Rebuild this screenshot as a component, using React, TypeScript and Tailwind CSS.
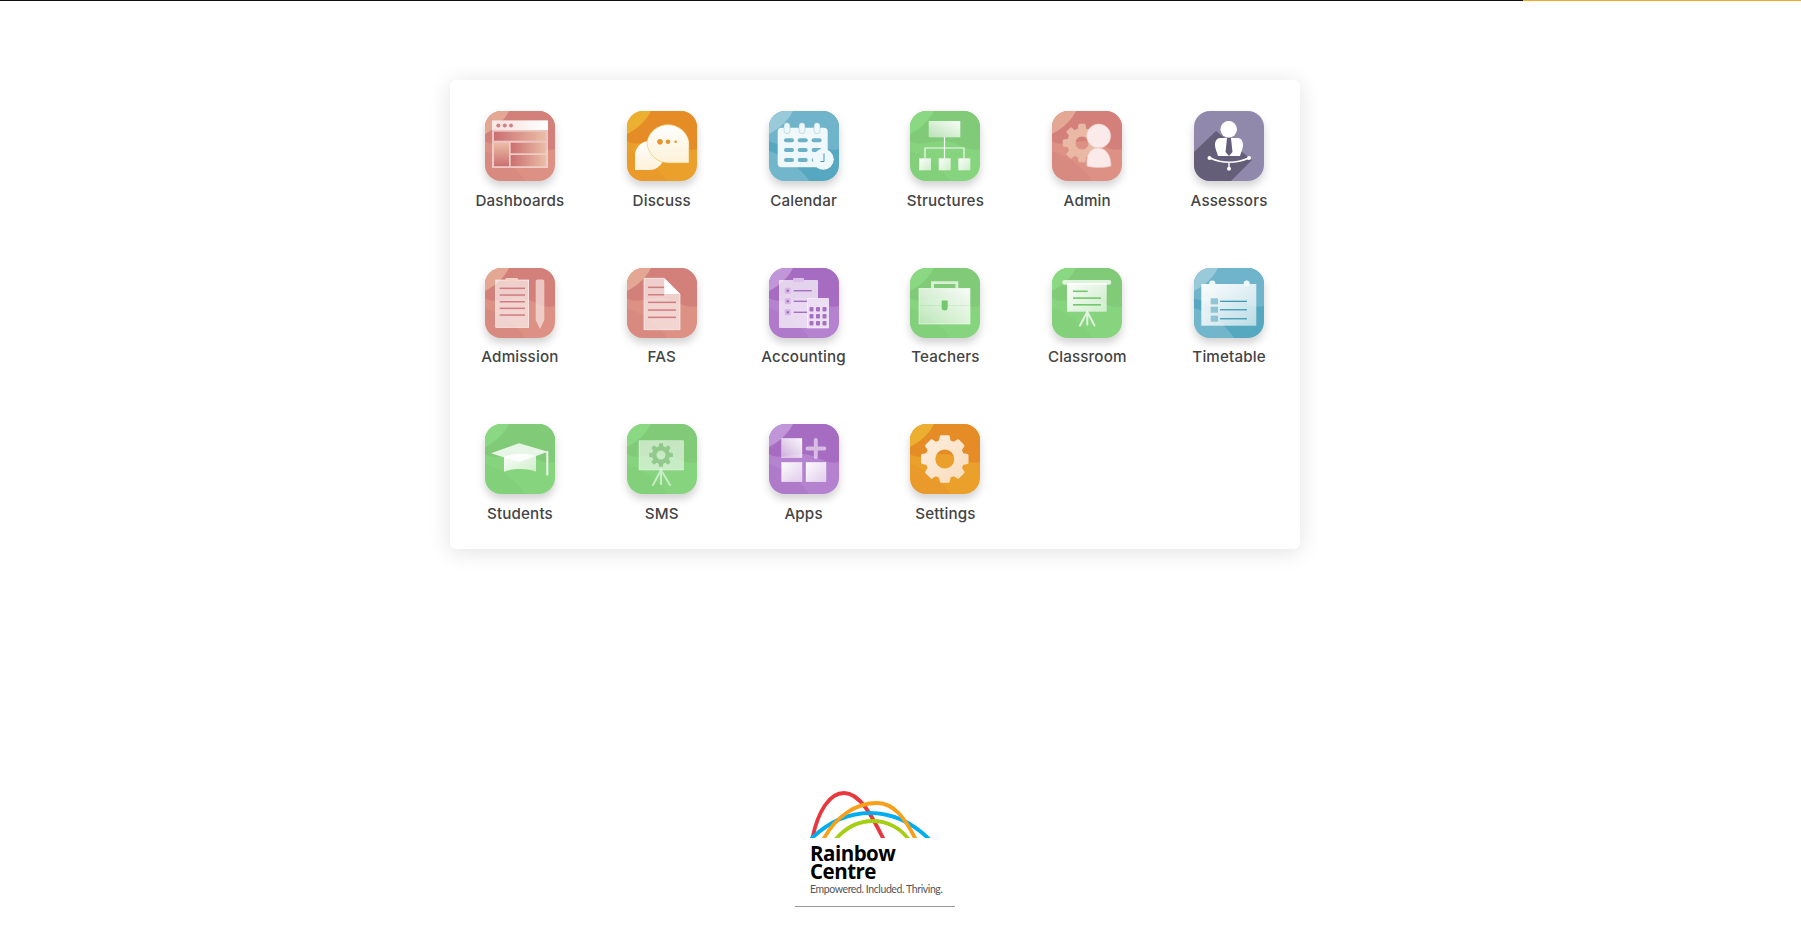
import type { ReactNode } from 'react';

type Palette = { base: string; top: string; light: string; band: string; ink: string };

const salmon: Palette = { base: '#dc9184', top: '#d4807a', light: '#e3a794', band: '#d6857d', ink: '#c9666b' };
const orange: Palette = { base: '#eba02b', top: '#e68c26', light: '#ecb030', band: '#e8962a', ink: '#e8952a' };
const teal: Palette = { base: '#55a8c0', top: '#6fb4ca', light: '#98cada', band: '#83bfd2', ink: '#3f9ab6' };
const green: Palette = { base: '#86d47e', top: '#80ca78', light: '#8bd883', band: '#82cd7a', ink: '#72c86c' };
const purple: Palette = { base: '#b582cf', top: '#a66cc1', light: '#c096d8', band: '#ac74c7', ink: '#9a5cb8' };

// simple toothed wheel, used by Admin, SMS and Settings
function gearPath(cx: number, cy: number, ro: number, ri: number, teeth: number, hole: number) {
  const step = (Math.PI * 2) / teeth;
  let d = '';
  for (let i = 0; i < teeth; i++) {
    const a = i * step - Math.PI / 2;
    const pts: [number, number][] = [
      [ri, a - step * 0.32],
      [ro, a - step * 0.2],
      [ro, a + step * 0.2],
      [ri, a + step * 0.32],
    ];
    for (const [r, t] of pts) {
      d += `${d ? 'L' : 'M'}${(cx + r * Math.cos(t)).toFixed(2)} ${(cy + r * Math.sin(t)).toFixed(2)}`;
    }
  }
  d += `Z M${cx - hole} ${cy}a${hole} ${hole} 0 1 0 ${hole * 2} 0a${hole} ${hole} 0 1 0 ${-hole * 2} 0Z`;
  return d;
}

function Defs() {
  return (
    <svg className="block h-0 w-0" aria-hidden="true">
      <defs>
        <linearGradient id="fade" x1="0" y1="0" x2="1" y2="1">
          <stop offset="0" stopColor="#fff" stopOpacity="0.97" />
          <stop offset="1" stopColor="#fff" stopOpacity="0.6" />
        </linearGradient>
        <linearGradient id="fadeBack" x1="1" y1="0" x2="0" y2="1">
          <stop offset="0" stopColor="#fff" stopOpacity="0.95" />
          <stop offset="1" stopColor="#fff" stopOpacity="0.45" />
        </linearGradient>
        <linearGradient id="barFade" x1="0" y1="0" x2="1" y2="0">
          <stop offset="0" stopColor="#fff" stopOpacity="0.45" />
          <stop offset="1" stopColor="#fff" stopOpacity="1" />
        </linearGradient>
        <linearGradient id="panel" x1="0" y1="0" x2="1" y2="0">
          <stop offset="0" stopColor="#cb6f72" />
          <stop offset="1" stopColor="#ebbea6" />
        </linearGradient>
        <linearGradient id="panelDown" x1="0" y1="0" x2="0" y2="1">
          <stop offset="0" stopColor="#ebbea6" />
          <stop offset="1" stopColor="#cb6f72" />
        </linearGradient>
        <linearGradient id="cream" x1="0" y1="0" x2="0" y2="1">
          <stop offset="0" stopColor="#fff" />
          <stop offset="1" stopColor="#fdf1d8" />
        </linearGradient>
        <linearGradient id="gearCream" x1="0" y1="0" x2="1" y2="1">
          <stop offset="0" stopColor="#fdeede" />
          <stop offset="1" stopColor="#f9dcbc" />
        </linearGradient>
      </defs>
    </svg>
  );
}

function Tile({ p, children, plain }: { p: Palette; children: ReactNode; plain?: boolean }) {
  return (
    <div className="h-[70px] w-[70px] shrink-0 overflow-hidden rounded-2xl shadow-[0_5px_9px_rgba(0,0,0,0.18)]">
      <svg viewBox="0 0 70 70" className="block h-full w-full">
        <rect width="70" height="70" fill={plain ? '#9189ac' : p.base} />
        {!plain && (
          <>
            <path d="M14 0H70V38C58 42 48 30 34 30C20 30 8 36 0 30V12C8 10 14 6 14 0Z" fill={p.top} />
            <path d="M0 0H24C20 8 12 17 0 23Z" fill={p.light} />
            <path d="M0 40C12 44 22 50 30 58C34 62 38 66 40 70H0Z" fill={p.band} opacity="0.6" />
          </>
        )}
        {children}
      </svg>
    </div>
  );
}

const Dashboards = () => (
  <Tile p={salmon}>
    <rect x="7" y="9.5" width="56" height="47.5" fill="#fff" fillOpacity="0.55" />
    <rect x="7" y="9.5" width="56" height="9.5" fill="url(#barFade)" />
    <circle cx="13.3" cy="14.5" r="2" fill={salmon.ink} opacity="0.8" />
    <circle cx="19.8" cy="14.5" r="2" fill={salmon.ink} opacity="0.8" />
    <circle cx="26" cy="14.5" r="2" fill={salmon.ink} opacity="0.8" />
    <rect x="9" y="20.7" width="52" height="9" fill="url(#panel)" />
    <rect x="9" y="31.7" width="15" height="23.5" fill="url(#panelDown)" />
    <rect x="25.7" y="31.7" width="35.3" height="10.6" fill="url(#panel)" />
    <rect x="25.7" y="44" width="35.3" height="11.2" fill="url(#panel)" />
  </Tile>
);

const Discuss = () => (
  <Tile p={orange}>
    <path d="M8 59V44.5A14.5 14.5 0 1 1 22.5 59Z" fill="url(#cream)" />
    <path d="M20 30.5A21.5 21.5 0 0 1 62 30.5V52H41.5A21.5 21.5 0 0 1 20 30.5Z" fill="url(#cream)" stroke={orange.light} strokeWidth="0.5" />
    <circle cx="33" cy="30.7" r="2.8" fill={orange.ink} />
    <circle cx="41" cy="30.7" r="2.3" fill={orange.ink} />
    <circle cx="48.7" cy="30.7" r="1.3" fill={orange.ink} />
  </Tile>
);

const Calendar = () => (
  <Tile p={teal}>
    <rect x="8.7" y="16.7" width="50" height="39.6" rx="4" fill="#fff" opacity="0.9" />
    {[18, 33, 48].map((x) => (
      <rect key={x} x={x - 3} y="11.7" width="6" height="11" rx="3" fill="#eef7fa" stroke="#8cc4d5" strokeWidth="0.5" />
    ))}
    {[29.3, 39, 49].map((y) =>
      [20, 33.7, 47.6].map((x) => <rect key={`${x}-${y}`} x={x - 5} y={y - 2} width="10" height="4" rx="2" fill={teal.ink} opacity="0.75" />),
    )}
    <circle cx="54.3" cy="48.3" r="10.5" fill="#eef7fa" />
    <path d="M55 42.5V50.5H51.5" fill="none" stroke={teal.ink} strokeWidth="1" />
  </Tile>
);

const Structures = () => (
  <Tile p={green}>
    <rect x="18.7" y="10" width="31.6" height="16.3" fill="url(#fadeBack)" />
    <path d="M34.5 26V37M15 47.3V37H54V47.3M34.5 37V47.3" fill="none" stroke="#fff" strokeOpacity="0.9" strokeWidth="1.2" />
    {[9, 28.7, 48.3].map((x) => (
      <rect key={x} x={x} y="47.3" width="12" height="12" fill="url(#fade)" />
    ))}
  </Tile>
);

const Admin = () => (
  <Tile p={salmon}>
    <path d={gearPath(30, 32, 19, 14.5, 8, 7)} fill="#eab9a6" fillRule="evenodd" stroke="#eab9a6" strokeWidth="1" strokeLinejoin="round" />
    <circle cx="46.7" cy="25" r="12" fill="#fbeaea" stroke="#f3c9c7" strokeWidth="0.6" />
    <path d="M35 55C34 44 38 37 46 37C54 37 59 44 59 55C52 57 42 57 35 55Z" fill="#fbeaea" stroke="#f3c9c7" strokeWidth="0.6" />
  </Tile>
);

const Assessors = () => (
  <Tile p={salmon} plain>
    <path d="M0 41L22 20L58 49L37 70H0Z" fill="#645e78" />
    <circle cx="34.7" cy="18.3" r="8.3" fill="#fff" />
    <path d="M26 27H44C47 27 49 30 49 34C49 38 47 41 46 45H24C23 41 21 38 21 34C21 30 23 27 26 27Z" fill="#fff" />
    <path d="M33 27H37L37.5 32L38.5 41L35 45L31.5 41L32.5 32Z" fill="#645e78" />
    <path d="M16 47C28 52.5 42 52.5 55 47" fill="none" stroke="#fff" strokeWidth="1.6" />
    <path d="M35 51V57" stroke="#fff" strokeWidth="1.4" />
    <circle cx="15.5" cy="47" r="2" fill="#fff" />
    <circle cx="55" cy="47" r="2" fill="#fff" />
    <circle cx="35" cy="57.7" r="2" fill="#fff" />
  </Tile>
);

const Admission = () => (
  <Tile p={salmon}>
    <rect x="10.7" y="12" width="33" height="47.3" fill="#fff" fillOpacity="0.62" stroke="#fff" strokeWidth="0.6" />
    <rect x="20.5" y="10" width="12.5" height="4" rx="1" fill="#f3d3c8" />
    {[20.3, 27, 33.7, 40.3, 47].map((y) => (
      <rect key={y} x="14.7" y={y - 0.7} width="25.3" height="1.5" fill={salmon.ink} opacity="0.8" />
    ))}
    <path d="M50.7 14A2 2 0 0 1 52.7 11.5H57.3A2 2 0 0 1 59.3 14V52L55 61L50.7 52Z" fill="#fff" fillOpacity="0.55" />
  </Tile>
);

const Fas = () => (
  <Tile p={salmon}>
    <path d="M17 10.3H37.3L53 26V61.7H17Z" fill="#fff" fillOpacity="0.62" stroke="#fff" strokeWidth="0.6" />
    <path d="M37.3 10.3L53 26H37.3Z" fill="#fff" />
    {[19.3, 26.7].map((y) => (
      <rect key={y} x="21" y={y - 0.7} width="16" height="1.5" fill={salmon.ink} opacity="0.8" />
    ))}
    {[34.3, 42, 49.3].map((y) => (
      <rect key={y} x="21" y={y - 0.7} width="28" height="1.5" fill={salmon.ink} opacity="0.8" />
    ))}
  </Tile>
);

const Accounting = () => (
  <Tile p={purple}>
    <rect x="10" y="12" width="39" height="48" fill="#fff" fillOpacity="0.7" rx="1" />
    <rect x="24" y="10" width="11" height="4" rx="1" fill="#dcc0ea" />
    {[22.7, 33.3, 44.3].map((y) => (
      <g key={y}>
        <rect x="15.7" y={y - 3} width="6" height="6" rx="1" fill="#d6b6e6" />
        <rect x="17.7" y={y - 1} width="2" height="2" fill={purple.ink} />
        <rect x="24.7" y={y - 0.7} width="18" height="1.4" fill={purple.ink} opacity="0.85" />
      </g>
    ))}
    <rect x="38.3" y="30.3" width="21.4" height="29.7" fill="#ecdff3" stroke="#fff" strokeWidth="0.5" />
    {[39, 46, 53].map((y) =>
      [42.5, 49, 55.5].map((x) => <rect key={`${x}-${y}`} x={x - 2} y={y} width="4" height="4.5" rx="1" fill={purple.ink} opacity="0.85" />),
    )}
  </Tile>
);

const Teachers = () => (
  <Tile p={green}>
    <path d="M21 20.3V13.3H48.3V20.3H45.5V16H24V20.3Z" fill="#fff" fillOpacity="0.7" />
    <rect x="9" y="20.3" width="51" height="35.7" fill="url(#fadeBack)" stroke="#fff" strokeWidth="0.5" />
    <path d="M9 37.5H60" stroke={green.top} strokeOpacity="0.3" strokeWidth="0.6" />
    <path d="M31.7 32.5H37.7V39.5A3 3 0 0 1 31.7 39.5Z" fill={green.ink} />
  </Tile>
);

const Classroom = () => (
  <Tile p={green}>
    <rect x="15" y="15" width="39.7" height="28.7" fill="url(#fade)" />
    <rect x="10.3" y="12" width="49" height="4.7" rx="2.3" fill="#fff" fillOpacity="0.75" />
    <rect x="21" y="22.5" width="14.7" height="1.6" fill={green.ink} />
    <rect x="21" y="29.3" width="28" height="1.6" fill={green.ink} />
    <rect x="21" y="36" width="28" height="1.6" fill={green.ink} />
    <path d="M35.3 43.7L28 57.5M35.3 43.7V56.5M35.3 43.7L42.5 57.5" fill="none" stroke="#fff" strokeOpacity="0.75" strokeWidth="2" strokeLinecap="round" />
  </Tile>
);

const Timetable = () => (
  <Tile p={teal}>
    <rect x="7.3" y="16" width="55" height="41.7" fill="url(#fade)" />
    <circle cx="18.3" cy="15.5" r="3" fill="#f2f9fb" />
    <circle cx="52.7" cy="15.5" r="3" fill="#f2f9fb" />
    {[30.3, 38.7, 47.7].map((y) => (
      <g key={y}>
        <rect x="16.7" y={y} width="7.3" height="6" fill={teal.ink} opacity="0.5" />
        <rect x="26" y={y + 2.4} width="27" height="1.3" fill={teal.ink} />
      </g>
    ))}
  </Tile>
);

const Students = () => (
  <Tile p={green}>
    <path d="M19 33C28 29 42 29 51 32V47.7C42 44 28 44.5 19 47.7Z" fill="url(#fade)" />
    <path d="M6 29.3L34 19.3L63 27.7L34 38Z" fill="#fff" fillOpacity="0.82" />
    <path d="M62.3 28V50.5" stroke="#fff" strokeOpacity="0.85" strokeWidth="2" strokeLinecap="round" />
  </Tile>
);

const Sms = () => (
  <Tile p={green}>
    <rect x="12" y="16.7" width="44.5" height="29.3" fill="#fff" fillOpacity="0.55" stroke="#fff" strokeOpacity="0.6" strokeWidth="0.6" />
    <path d={gearPath(34, 31, 12, 9, 8, 4.5)} fill="#7fbf78" fillRule="evenodd" opacity="0.75" />
    <path d="M34 46L26 61M34 46V60M34 46L43 61" fill="none" stroke="#fff" strokeOpacity="0.55" strokeWidth="2" strokeLinecap="round" />
  </Tile>
);

const Apps = () => (
  <Tile p={purple}>
    <rect x="12.6" y="14.3" width="20.4" height="19.4" fill="url(#fadeBack)" stroke="#fff" strokeOpacity="0.6" strokeWidth="0.5" />
    <rect x="12.6" y="38.3" width="20.4" height="19.4" fill="url(#fade)" stroke="#fff" strokeOpacity="0.6" strokeWidth="0.5" />
    <rect x="37" y="38.3" width="20" height="19.4" fill="url(#fade)" stroke="#fff" strokeOpacity="0.6" strokeWidth="0.5" />
    <path d="M46.8 16V33M38.5 24.5H55.3" stroke="#fff" strokeOpacity="0.55" strokeWidth="4" strokeLinecap="round" />
  </Tile>
);

const Settings = () => (
  <Tile p={orange}>
    <path d={gearPath(34.8, 35, 22.5, 18, 8, 11)} fill="url(#gearCream)" fillRule="evenodd" stroke="url(#gearCream)" strokeWidth="3" strokeLinejoin="round" />
  </Tile>
);

const apps = [
  { label: 'Dashboards', icon: <Dashboards /> },
  { label: 'Discuss', icon: <Discuss /> },
  { label: 'Calendar', icon: <Calendar /> },
  { label: 'Structures', icon: <Structures /> },
  { label: 'Admin', icon: <Admin /> },
  { label: 'Assessors', icon: <Assessors /> },
  { label: 'Admission', icon: <Admission /> },
  { label: 'FAS', icon: <Fas /> },
  { label: 'Accounting', icon: <Accounting /> },
  { label: 'Teachers', icon: <Teachers /> },
  { label: 'Classroom', icon: <Classroom /> },
  { label: 'Timetable', icon: <Timetable /> },
  { label: 'Students', icon: <Students /> },
  { label: 'SMS', icon: <Sms /> },
  { label: 'Apps', icon: <Apps /> },
  { label: 'Settings', icon: <Settings /> },
];

function Logo() {
  return (
    <div className="flex w-[160px] flex-col border-b border-[#999999] pb-[10px] pl-[15px] font-['Open_Sans',sans-serif]">
      <svg viewBox="0 0 135 50" className="block h-[50px] w-[135px]">
        <path d="M2 52C8 22 20 5 34 5C50 5 62 28 74 52" fill="none" stroke="#e8383d" strokeWidth="3.8" />
        <path d="M0 52C18 34 38 25 60 25C82 25 102 34 120 52" fill="none" stroke="#00aeef" strokeWidth="3.8" />
        <path d="M13 52C26 28 46 15 67 15C84 15 95 30 106 52" fill="none" stroke="#f7a11a" strokeWidth="3.8" />
        <path d="M25 52C36 39 48 33 63 33C76 33 90 39 99 52" fill="none" stroke="#a6ce12" strokeWidth="3.8" />
      </svg>
      <div className="mt-[6px] text-[20.5px] leading-[18px] font-bold tracking-[-0.5px] text-black">
        Rainbow
        <br />
        Centre
      </div>
      <div className="mt-[3px] font-['Lato',sans-serif] text-[10.5px] leading-[13px] tracking-[-0.4px] whitespace-nowrap text-[#555555]">
        Empowered. Included. Thriving.
      </div>
    </div>
  );
}

export default function App() {
  return (
    <div className="min-h-[932px] bg-white">
      <Defs />
      <div className="flex h-px">
        <div className="flex-1 bg-[#111111]" />
        <div className="w-[278px] bg-[#f5a623]" />
      </div>

      <div className="ml-[450px] flex w-[850px] flex-col items-center pt-[79px]">
        <div className="w-full rounded-md bg-white pt-[31px] pb-[24px] shadow-[0_3px_22px_rgba(0,0,0,0.12)]">
          <div className="-ml-[1px] grid grid-cols-6 gap-y-[55.5px]">
            {apps.map((app) => (
              <div key={app.label} className="flex flex-col items-center">
                {app.icon}
                <span className="mt-[8.5px] font-['Inter',sans-serif] text-[15.2px] leading-[22.5px] font-medium tracking-[0.15px] text-[#444444]">
                  {app.label}
                </span>
              </div>
            ))}
          </div>
        </div>

        <div className="mt-[239px]">
          <Logo />
        </div>
      </div>
    </div>
  );
}
